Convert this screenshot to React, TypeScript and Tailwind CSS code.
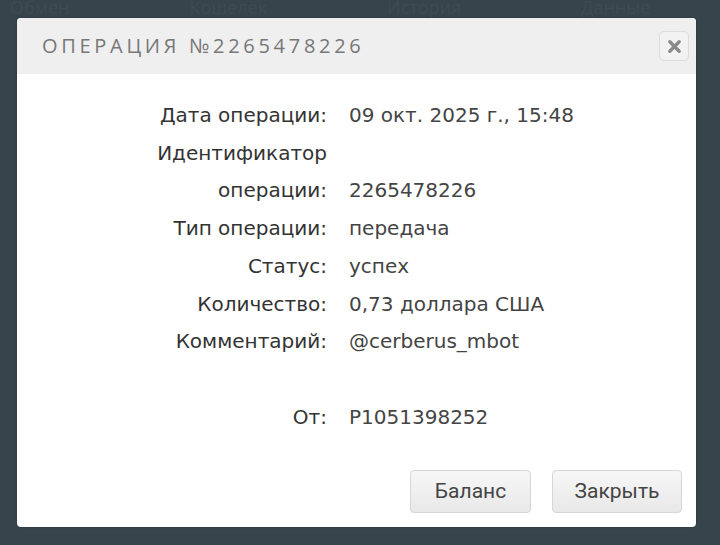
const rows: { label: string; value: string }[] = [
  { label: "Дата операции:", value: "09 окт. 2025 г., 15:48" },
  { label: "Идентификатор", value: "" },
  { label: "операции:", value: "2265478226" },
  { label: "Тип операции:", value: "передача" },
  { label: "Статус:", value: "успех" },
  { label: "Количество:", value: "0,73 доллара США" },
  { label: "Комментарий:", value: "@cerberus_mbot" },
  { label: "", value: "" },
  { label: "От:", value: "P1051398252" },
];

export default function App() {
  return (
    <div className="relative h-[545px] w-[720px] overflow-hidden bg-[#36444c] font-['Open_Sans',sans-serif]">
      {/* faint page behind the overlay */}
      <div className="flex gap-[120px] px-[10px] pt-[2px] text-[18px] leading-[10px] text-[#3e4b53]">
        <span>Обмен</span>
        <span>Кошелёк</span>
        <span>История</span>
        <span>Данные</span>
        <span>Выход</span>
      </div>

      {/* modal */}
      <div className="absolute left-[17px] top-[18px] flex h-[509px] w-[679px] flex-col overflow-hidden rounded-[4px] bg-white shadow-[0_0_2px_rgba(0,0,0,0.3)]">
        <div className="flex h-[56px] shrink-0 items-center justify-between bg-[#efefef] pl-[25px] pr-[7px]">
          <span className="text-[20px] tracking-[3.7px] text-[#777777]">ОПЕРАЦИЯ №2265478226</span>
          <button className="flex h-[30px] w-[30px] items-center justify-center rounded-[5px] border border-[#dcdcdc] bg-[#f2f2f2]">
            <svg width="15" height="15" viewBox="0 0 15 15">
              <path d="M2.8 2.8 L12.2 12.2 M12.2 2.8 L2.8 12.2" stroke="#8a8a8a" strokeWidth="3.4" strokeLinecap="round" />
            </svg>
          </button>
        </div>

        <div className="flex flex-1 flex-col pt-[22px] font-['DejaVu_Sans',sans-serif]">
          {rows.map((r, i) => (
            <div key={i} className="flex h-[37.75px] items-center text-[20px]">
              <span className="w-[310px] text-right text-[#333333]">{r.label}</span>
              <span className="pl-[22px] text-[#444444]">{r.value}</span>
            </div>
          ))}
        </div>

        <div className="flex justify-end gap-[21px] pb-[14px] pr-[14px] font-['Roboto',sans-serif]">
          <button className="h-[43px] w-[121px] rounded-[4px] border border-[#d6d6d6] bg-gradient-to-b from-[#f7f7f7] to-[#e8e8e8] text-[21px] text-[#444444]">
            Баланс
          </button>
          <button className="h-[43px] w-[130px] rounded-[4px] border border-[#d6d6d6] bg-gradient-to-b from-[#f7f7f7] to-[#e8e8e8] text-[21px] text-[#444444]">
            Закрыть
          </button>
        </div>
      </div>
    </div>
  );
}
